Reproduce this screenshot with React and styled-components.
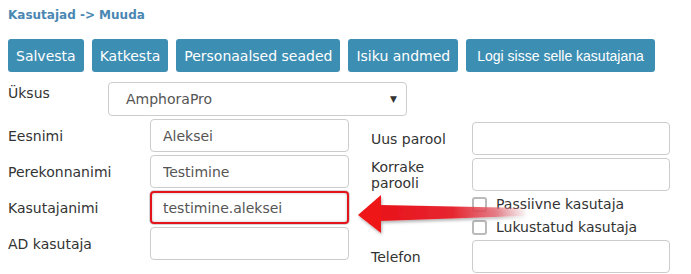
import React from "react";
import styled, { createGlobalStyle } from "styled-components";

const GlobalStyle = createGlobalStyle`
  body {
    margin: 8px;
    background: #fff;
    font-family: "DejaVu Sans", Verdana, sans-serif;
    color: #333;
  }
`;

const Page = styled.div`
  position: relative;
  width: 675px;
`;

const Title = styled.div`
  font-size: 12px;
  font-weight: bold;
  line-height: 15px;
  color: #4a87b3;
  margin-bottom: 16px;
`;

const Toolbar = styled.div`
  display: flex;
  gap: 8px;
  margin-bottom: 10px;
`;

const Button = styled.button`
  height: 33px;
  padding: ${(p) => (p.$wide ? "0 11px" : "0 8px")};
  border: none;
  border-radius: 3px;
  background: #3d8eb3;
  color: #fff;
  font-family: ${(p) =>
    p.$wide ? '"Liberation Sans", Arial, sans-serif' : '"DejaVu Sans", Verdana, sans-serif'};
  font-size: 14px;
  cursor: pointer;
`;

const UnitRow = styled.div`
  display: grid;
  grid-template-columns: 100px 299px;
`;

const Label = styled.div`
  font-size: 14px;
  line-height: 16px;
  color: #333;
  padding-top: ${(p) => (p.$top ? "3px" : "0")};
  grid-column: 1;
`;

const Select = styled.div`
  box-sizing: border-box;
  height: 34px;
  border: 1px solid #ccc;
  border-radius: 4px;
  padding: 0 9px 0 17px;
  display: flex;
  align-items: center;
  justify-content: space-between;
  font-size: 14px;
  color: #555;
`;

const Caret = styled.span`
  font-size: 9px;
  color: #333;
`;

const Columns = styled.div`
  display: flex;
  align-items: flex-start;
  margin-top: 3px;
`;

const FieldTable = styled.div`
  display: grid;
  grid-template-columns: ${(p) => p.$labelWidth}px ${(p) => p.$inputWidth}px;
  grid-template-rows: ${(p) => p.$rows};
  row-gap: 3px;
  align-items: center;
  margin-left: ${(p) => p.$left || 0}px;
  margin-top: ${(p) => p.$top || 0}px;
`;

const Input = styled.input`
  box-sizing: border-box;
  grid-column: 2;
  width: 100%;
  height: 33px;
  border: ${(p) => (p.$highlight ? "2px solid #e3141c" : "1px solid #ccc")};
  border-radius: 4px;
  padding: 0 ${(p) => (p.$highlight ? "11px" : "12px")};
  font-family: "DejaVu Sans", Verdana, sans-serif;
  font-size: 14px;
  color: #555;
  background: #fff;
  outline: none;
  box-shadow: ${(p) =>
    p.$highlight ? "0 0 0 1px #d6d6d6, inset 0 0 3px rgba(0,0,0,0.25)" : "none"};
`;

const CheckRow = styled.label`
  grid-column: 2;
  display: flex;
  align-items: center;
  gap: 9px;
  font-size: 14px;
  color: #333;
`;

const Box = styled.span`
  box-sizing: border-box;
  width: 15px;
  height: 15px;
  border: 2px solid #bababa;
  border-radius: 3px;
  background: #fff;
`;

const ArrowLayer = styled.svg`
  position: absolute;
  left: 332px;
  top: 172px;
  pointer-events: none;
`;

function Arrow() {
  return (
    <ArrowLayer width="200" height="60" viewBox="0 0 200 60">
      <defs>
        <linearGradient id="shaft" x1="0" y1="0" x2="1" y2="0">
          <stop offset="0" stopColor="#e8141a" />
          <stop offset="0.5" stopColor="#e62630" />
          <stop offset="0.8" stopColor="#e4606c" stopOpacity="0.75" />
          <stop offset="1" stopColor="#f0a0a8" stopOpacity="0.1" />
        </linearGradient>
        <filter id="shadow" x="-10%" y="-30%" width="130%" height="170%">
          <feDropShadow dx="1" dy="2" stdDeviation="1.5" floodColor="#000" floodOpacity="0.3" />
        </filter>
      </defs>
      <g filter="url(#shadow)">
        <polygon points="40,25 185,28 185,36 40,41" fill="url(#shaft)" />
        <polygon points="18,35 41,15 41,53" fill="#ee1316" />
      </g>
    </ArrowLayer>
  );
}

export default function App() {
  return (
    <>
      <GlobalStyle />
      <Page>
        <Title>Kasutajad -&gt; Muuda</Title>
        <Toolbar>
          <Button>Salvesta</Button>
          <Button>Katkesta</Button>
          <Button>Personaalsed seaded</Button>
          <Button>Isiku andmed</Button>
          <Button $wide>Logi sisse selle kasutajana</Button>
        </Toolbar>
        <UnitRow>
          <Label $top>Üksus</Label>
          <Select>
            <span>AmphoraPro</span>
            <Caret>▼</Caret>
          </Select>
        </UnitRow>
        <Columns>
          <FieldTable $labelWidth={142} $inputWidth={199} $rows="33px 33px 33px 33px">
            <Label>Eesnimi</Label>
            <Input readOnly defaultValue="Aleksei" />
            <Label>Perekonnanimi</Label>
            <Input readOnly defaultValue="Testimine" />
            <Label>Kasutajanimi</Label>
            <Input readOnly $highlight defaultValue="testimine.aleksei" />
            <Label>AD kasutaja</Label>
            <Input readOnly defaultValue="" />
          </FieldTable>
          <FieldTable
            $labelWidth={101}
            $inputWidth={198}
            $left={22}
            $top={3}
            $rows="33px 33px 20px 20px 33px"
          >
            <Label>Uus parool</Label>
            <Input readOnly type="password" defaultValue="" />
            <Label>Korrake parooli</Label>
            <Input readOnly type="password" defaultValue="" />
            <CheckRow>
              <Box />
              Passiivne kasutaja
            </CheckRow>
            <CheckRow>
              <Box />
              Lukustatud kasutaja
            </CheckRow>
            <Label>Telefon</Label>
            <Input readOnly defaultValue="" />
          </FieldTable>
        </Columns>
        <Arrow />
      </Page>
    </>
  );
}
